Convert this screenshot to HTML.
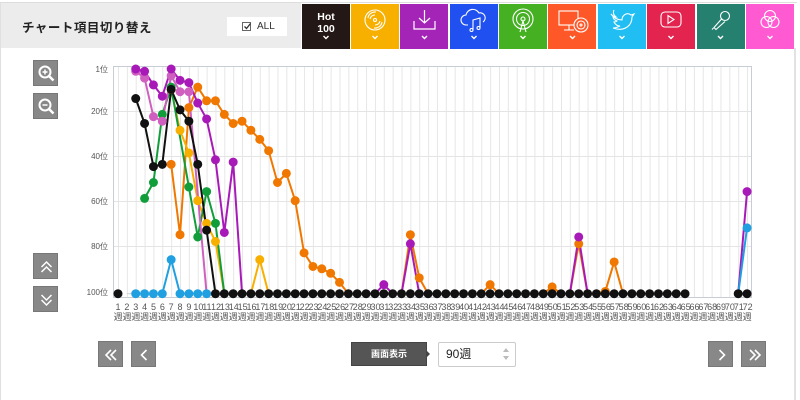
<!DOCTYPE html>
<html><head><meta charset="utf-8">
<style>
*{margin:0;padding:0;box-sizing:border-box}
body{width:800px;height:400px;background:#fff;position:relative;overflow:hidden;font-family:"Liberation Sans","Noto Sans CJK JP",sans-serif}
.abs{position:absolute}
.bar{left:1px;top:3px;width:300px;height:45px;background:#ececec}
.title{left:22px;top:17px;font-size:12.5px;font-weight:bold;color:#222;letter-spacing:0.5px}
.all{left:227px;top:17px;width:60px;height:19px;background:#fff;font-size:10px;color:#333;line-height:19px;padding-left:14px}
.all .cb{position:absolute;left:15px;top:5px;width:9px;height:9px;border:1px solid #666;background:#fff}
.all span{position:absolute;left:30px}
.tile{top:4px;height:45px;width:48px}
.tile svg{position:absolute;left:0;top:0}
.btn{width:25px;height:26px;background:#888;border:1px solid #777}
.btn svg{position:absolute;left:0;top:0}
.lab{left:113.6px;top:302px;display:flex;font-size:9px;color:#555;line-height:10px}
.lab div{width:8.86px;text-align:center;white-space:nowrap;display:flex;flex-direction:column;align-items:center}
.lab div span{display:block;width:8.86px;text-align:center;overflow:visible}
.yl{font-size:8px;color:#555;text-align:right;width:30px;left:78px}
</style></head><body>
<div class="abs" style="left:0;top:2px;width:797px;height:1px;background:#ddd"></div>
<div class="abs" style="left:0;top:3px;width:1px;height:397px;background:#e0e0e0"></div>
<div class="abs" style="left:794px;top:48px;width:2px;height:352px;background:#e2e2e2"></div>
<div class="abs bar"></div>
<div class="abs title">チャート項目切り替え</div>
<div class="abs all"><div class="cb"></div><svg class="abs" style="left:16px;top:5px" width="9" height="9"><path d="M1.5 4.5l2 2 4-5" fill="none" stroke="#333" stroke-width="1.3"/></svg><span>ALL</span></div>

<div class="abs tile" style="left:302px;background:#231815;color:#fff;text-align:center;font-size:10.5px;font-weight:bold;line-height:12px;padding-top:7px">Hot<br>100</div>
<div class="abs tile" style="left:351px;background:#f8b000"><svg width="48" height="45"><g fill="none" stroke="#fff" stroke-width="1.1"><circle cx="24" cy="16" r="10"/><path d="M17 14a7 7 0 0 1 8-6M19 15a5 5 0 0 1 5-4M31 18a7 7 0 0 1-8 6M29 17a5 5 0 0 1-5 4"/><circle cx="24" cy="16" r="1.5"/></g></svg></div>
<div class="abs tile" style="left:400px;background:#a424b8"><svg width="49" height="45"><g fill="none" stroke="#fff" stroke-width="1.2"><path d="M24.5 6v13M19 14l5.5 5 5.5-5M14 17v8h21v-8"/></g></svg></div>
<div class="abs tile" style="left:450px;background:#2050f0"><svg width="48" height="45"><g fill="none" stroke="#fff" stroke-width="1.1"><path d="M18 21h-2a5 5 0 0 1 0-10 7 7 0 0 1 13-2 5 5 0 0 1 4 9"/><path d="M23 26v-10l7-2v10"/><circle cx="21.5" cy="26" r="1.5"/><circle cx="28.5" cy="24" r="1.5"/></g></svg></div>
<div class="abs tile" style="left:499px;background:#44b022"><svg width="48" height="45"><g fill="none" stroke="#fff" stroke-width="1.1"><circle cx="24" cy="15" r="10"/><circle cx="24" cy="15" r="6.5"/><circle cx="24" cy="15" r="2"/><path d="M21 28l3-11 3 11"/></g></svg></div>
<div class="abs tile" style="left:548px;background:#ff5828"><svg width="49" height="45"><g fill="none" stroke="#fff" stroke-width="1.1"><rect x="11" y="7" width="19" height="14"/><path d="M16 26h10M21 21v5"/><circle cx="33" cy="21" r="7" fill="#ff5828"/><circle cx="33" cy="21" r="4"/><circle cx="33" cy="21" r="1"/></g></svg></div>
<div class="abs tile" style="left:598px;background:#20bef2"><svg width="48" height="45"><path d="M13 10c3 4 7 6 11 6 0-5 5-8 9-5l3-1-2 3c0 9-8 15-19 11 3 0 5-1 7-2-3 0-5-2-6-4 1 0 2 0 3-1-3-1-4-3-4-5 1 0 2 1 3 1-3-2-3-5-2-7" fill="none" stroke="#fff" stroke-width="1.1"/></svg></div>
<div class="abs tile" style="left:647px;background:#e2244e"><svg width="48" height="45"><g fill="none" stroke="#fff" stroke-width="1.1"><rect x="14" y="8" width="20" height="15" rx="4"/><path d="M21 11.5v8l6-4z"/></g></svg></div>
<div class="abs tile" style="left:697px;background:#268070"><svg width="48" height="45"><g fill="none" stroke="#fff" stroke-width="1.1"><circle cx="28" cy="12" r="4.5"/><path d="M25 14.5l-8 9 2 2 9-8M16.5 24l-1.5 1.5"/></g></svg></div>
<div class="abs tile" style="left:746px;background:#ff5ad2"><svg width="48" height="45"><g fill="none" stroke="#fff" stroke-width="1.1"><circle cx="24" cy="12" r="5.5"/><circle cx="20.5" cy="18" r="5.5"/><circle cx="27.5" cy="18" r="5.5"/></g></svg></div>
<svg class="abs" style="left:302px;top:34px" width="492" height="8"><g fill="none" stroke="#fff" stroke-width="1.4"><path d="M21.5 2l2.5 2.5 2.5-2.5M70.5 2l2.5 2.5 2.5-2.5M120 2l2.5 2.5 2.5-2.5M169.5 2l2.5 2.5 2.5-2.5M218.5 2l2.5 2.5 2.5-2.5M268 2l2.5 2.5 2.5-2.5M317.5 2l2.5 2.5 2.5-2.5M366.5 2l2.5 2.5 2.5-2.5M416 2l2.5 2.5 2.5-2.5M465.5 2l2.5 2.5 2.5-2.5"/></g></svg>

<div class="abs btn" style="left:33px;top:60px"><svg width="25" height="26"><circle cx="11" cy="11" r="5.5" fill="none" stroke="#fff" stroke-width="2"/><path d="M15 15l4.5 4.5" stroke="#fff" stroke-width="2.5"/><path d="M8.5 11h5M11 8.5v5" stroke="#fff" stroke-width="1.5"/></svg></div>
<div class="abs btn" style="left:33px;top:93px"><svg width="25" height="26"><circle cx="11" cy="11" r="5.5" fill="none" stroke="#fff" stroke-width="2"/><path d="M15 15l4.5 4.5" stroke="#fff" stroke-width="2.5"/><path d="M8.5 11h5" stroke="#fff" stroke-width="1.5"/></svg></div>
<div class="abs btn" style="left:33px;top:253px"><svg width="25" height="26"><path d="M7.5 13l5-5 5 5M7.5 18l5-5 5 5" fill="none" stroke="#fff" stroke-width="1.5"/></svg></div>
<div class="abs btn" style="left:33px;top:286px"><svg width="25" height="26"><path d="M7.5 8l5 5 5-5M7.5 13l5 5 5-5" fill="none" stroke="#fff" stroke-width="1.5"/></svg></div>

<div class="abs yl" style="top:64px">1位</div>
<div class="abs yl" style="top:106px">20位</div>
<div class="abs yl" style="top:151px">40位</div>
<div class="abs yl" style="top:196px">60位</div>
<div class="abs yl" style="top:241px">80位</div>
<div class="abs yl" style="top:287px">100位</div>

<svg class="abs" style="left:0;top:0" width="800" height="300">
<defs><pattern id="vg" patternUnits="userSpaceOnUse" x="118" y="0" width="8.86" height="300"><rect x="0" y="0" width="1" height="300" fill="#e6e6e6"/></pattern></defs>
<rect x="113" y="66" width="639" height="231" fill="url(#vg)"/>
<g stroke="#e4e4e4" stroke-width="1"><path d="M113 111.5h639M113 156.5h639M113 201.5h639M113 246.5h639"/></g>
<rect x="113.5" y="66.5" width="638" height="231" fill="none" stroke="#c8ccd4"/>
<g transform="translate(118,69) scale(8.86,2.27)" fill="none" stroke-linejoin="round">
<g stroke-width="2">
<path vector-effect="non-scaling-stroke" stroke="#f07800" d="M6 42L7 73 8 17 9 8 10 14 11 14 12 20 13 24 14 23 15 27 16 31 17 36 18 50 19 46 20 58 21 81 22 87 23 88 24 90 25 94 26 99M32 99L33 73 34 92 35 99M41 99L42 95 43 99M48 99L49 96 50 99M51 99L52 77 53 99M54 99L55 98 56 85 57 99"/>
<path vector-effect="non-scaling-stroke" stroke="#f8b000" d="M6 9L7 27 8 37 9 58 10 68 11 76 12 99M15 99L16 84 17 99"/>
<path vector-effect="non-scaling-stroke" stroke="#119e3a" d="M3 57L4 50 5 20 6 8 7 30 8 52 9 74 10 54 11 68 12 99"/>
<path vector-effect="non-scaling-stroke" stroke="#d060c0" d="M2 1L3 4 4 21 5 23 6 3 7 10 8 10 9 55 10 99"/>
<path vector-effect="non-scaling-stroke" stroke="#a81ab8" d="M2 0L3 1 4 7 5 12 6 0 7 5 8 6 9 15 10 22 11 40 12 72 13 41 14 99M29 99L30 95 31 99M32 99L33 77 34 99M51 99L52 74 53 99M70 99L71 54"/>
<path vector-effect="non-scaling-stroke" stroke="#111" d="M2 13L3 24 4 43 5 42 6 9 7 18 8 23 9 42 10 71 11 99"/>
<path vector-effect="non-scaling-stroke" stroke="#20a0e0" d="M5 99L6 84 7 99M70 99L71 70"/>
<path vector-effect="non-scaling-stroke" stroke="#ccc" stroke-width="1" d="M1 99h1"/>
</g>
<g stroke-linecap="round">
<path vector-effect="non-scaling-stroke" stroke="#20a0e0" stroke-width="9" d="M2 99h0M3 99h0M4 99h0M5 99h0M6 84h0M7 99h0M8 99h0M9 99h0M10 99h0M71 70h0"/>
<path vector-effect="non-scaling-stroke" stroke="#f07800" stroke-width="9" d="M6 42h0M7 73h0M8 17h0M9 8h0M10 14h0M11 14h0M12 20h0M13 24h0M14 23h0M15 27h0M16 31h0M17 36h0M18 50h0M19 46h0M20 58h0M21 81h0M22 87h0M23 88h0M24 90h0M25 94h0M33 73h0M34 92h0M42 95h0M49 96h0M52 77h0M55 98h0M56 85h0"/>
<path vector-effect="non-scaling-stroke" stroke="#f8b000" stroke-width="9" d="M6 9h0M7 27h0M8 37h0M9 58h0M10 68h0M11 76h0M16 84h0"/>
<path vector-effect="non-scaling-stroke" stroke="#119e3a" stroke-width="9" d="M3 57h0M4 50h0M5 20h0M6 8h0M8 52h0M9 74h0M10 54h0M11 68h0"/>
<path vector-effect="non-scaling-stroke" stroke="#d060c0" stroke-width="9" d="M2 1h0M3 4h0M4 21h0M5 23h0M6 3h0M7 10h0M8 10h0"/>
<path vector-effect="non-scaling-stroke" stroke="#a81ab8" stroke-width="9" d="M2 0h0M3 1h0M4 7h0M5 12h0M6 0h0M7 5h0M8 6h0M9 15h0M10 22h0M11 40h0M12 72h0M13 41h0M30 95h0M33 77h0M52 74h0M71 54h0"/>
<path vector-effect="non-scaling-stroke" stroke="#111" stroke-width="9" d="M2 13h0M3 24h0M4 43h0M5 42h0M6 9h0M7 18h0M8 23h0M9 42h0M10 71h0"/>
<path vector-effect="non-scaling-stroke" stroke="#111" stroke-width="9" d="M0 99h0M11 99h0M12 99h0M13 99h0M14 99h0M15 99h0M16 99h0M17 99h0M18 99h0M19 99h0M20 99h0M21 99h0M22 99h0M23 99h0M24 99h0M25 99h0M26 99h0M27 99h0M28 99h0M29 99h0M30 99h0M31 99h0M32 99h0M33 99h0M34 99h0M35 99h0M36 99h0M37 99h0M38 99h0M39 99h0M40 99h0M41 99h0M42 99h0M43 99h0M44 99h0M45 99h0M46 99h0M47 99h0M48 99h0M49 99h0M50 99h0M51 99h0M52 99h0M53 99h0M54 99h0M55 99h0M56 99h0M57 99h0M58 99h0M59 99h0M60 99h0M61 99h0M62 99h0M63 99h0M64 99h0M70 99h0M71 99h0"/>
</g>
</g>
</svg>

<div class="abs lab">
<div><span>1</span><span>週</span></div><div><span>2</span><span>週</span></div><div><span>3</span><span>週</span></div><div><span>4</span><span>週</span></div><div><span>5</span><span>週</span></div><div><span>6</span><span>週</span></div><div><span>7</span><span>週</span></div><div><span>8</span><span>週</span></div><div><span>9</span><span>週</span></div><div><span>10</span><span>週</span></div><div><span>11</span><span>週</span></div><div><span>12</span><span>週</span></div><div><span>13</span><span>週</span></div><div><span>14</span><span>週</span></div><div><span>15</span><span>週</span></div><div><span>16</span><span>週</span></div><div><span>17</span><span>週</span></div><div><span>18</span><span>週</span></div><div><span>19</span><span>週</span></div><div><span>20</span><span>週</span></div><div><span>21</span><span>週</span></div><div><span>22</span><span>週</span></div><div><span>23</span><span>週</span></div><div><span>24</span><span>週</span></div><div><span>25</span><span>週</span></div><div><span>26</span><span>週</span></div><div><span>27</span><span>週</span></div><div><span>28</span><span>週</span></div><div><span>29</span><span>週</span></div><div><span>30</span><span>週</span></div><div><span>31</span><span>週</span></div><div><span>32</span><span>週</span></div><div><span>33</span><span>週</span></div><div><span>34</span><span>週</span></div><div><span>35</span><span>週</span></div><div><span>36</span><span>週</span></div><div><span>37</span><span>週</span></div><div><span>38</span><span>週</span></div><div><span>39</span><span>週</span></div><div><span>40</span><span>週</span></div><div><span>41</span><span>週</span></div><div><span>42</span><span>週</span></div><div><span>43</span><span>週</span></div><div><span>44</span><span>週</span></div><div><span>45</span><span>週</span></div><div><span>46</span><span>週</span></div><div><span>47</span><span>週</span></div><div><span>48</span><span>週</span></div><div><span>49</span><span>週</span></div><div><span>50</span><span>週</span></div><div><span>51</span><span>週</span></div><div><span>52</span><span>週</span></div><div><span>53</span><span>週</span></div><div><span>54</span><span>週</span></div><div><span>55</span><span>週</span></div><div><span>56</span><span>週</span></div><div><span>57</span><span>週</span></div><div><span>58</span><span>週</span></div><div><span>59</span><span>週</span></div><div><span>60</span><span>週</span></div><div><span>61</span><span>週</span></div><div><span>62</span><span>週</span></div><div><span>63</span><span>週</span></div><div><span>64</span><span>週</span></div><div><span>65</span><span>週</span></div><div><span>66</span><span>週</span></div><div><span>67</span><span>週</span></div><div><span>68</span><span>週</span></div><div><span>69</span><span>週</span></div><div><span>70</span><span>週</span></div><div><span>71</span><span>週</span></div><div><span>72</span><span>週</span></div>
</div>

<div class="abs btn" style="left:98px;top:341px"><svg width="25" height="26"><path d="M12 8l-5 5 5 5M17 8l-5 5 5 5" fill="none" stroke="#fff" stroke-width="1.6"/></svg></div>
<div class="abs btn" style="left:131px;top:341px"><svg width="25" height="26"><path d="M14.5 8l-5 5 5 5" fill="none" stroke="#fff" stroke-width="1.6"/></svg></div>
<div class="abs btn" style="left:708px;top:341px"><svg width="25" height="26"><path d="M10.5 8l5 5-5 5" fill="none" stroke="#fff" stroke-width="1.6"/></svg></div>
<div class="abs btn" style="left:741px;top:341px"><svg width="25" height="26"><path d="M8 8l5 5-5 5M13 8l5 5-5 5" fill="none" stroke="#fff" stroke-width="1.6"/></svg></div>

<div class="abs" style="left:351px;top:342px;width:76px;height:24px;background:#555;border:1px solid #444;color:#fff;font-size:9px;font-weight:bold;text-align:center;line-height:22px">画面表示</div>
<div class="abs" style="left:426px;top:350px;width:0;height:0;border-top:4px solid transparent;border-bottom:4px solid transparent;border-left:4px solid #444"></div>
<div class="abs" style="left:438px;top:342px;width:78px;height:25px;border:1px solid #ccc;border-radius:2px;background:#fff;font-size:12px;color:#222;line-height:23px;padding-left:7px">90週</div>
<svg class="abs" style="left:502px;top:346px" width="8" height="16"><path d="M1 6l3-4 3 4zM1 10l3 4 3-4z" fill="#bbb"/></svg>
</body></html>
